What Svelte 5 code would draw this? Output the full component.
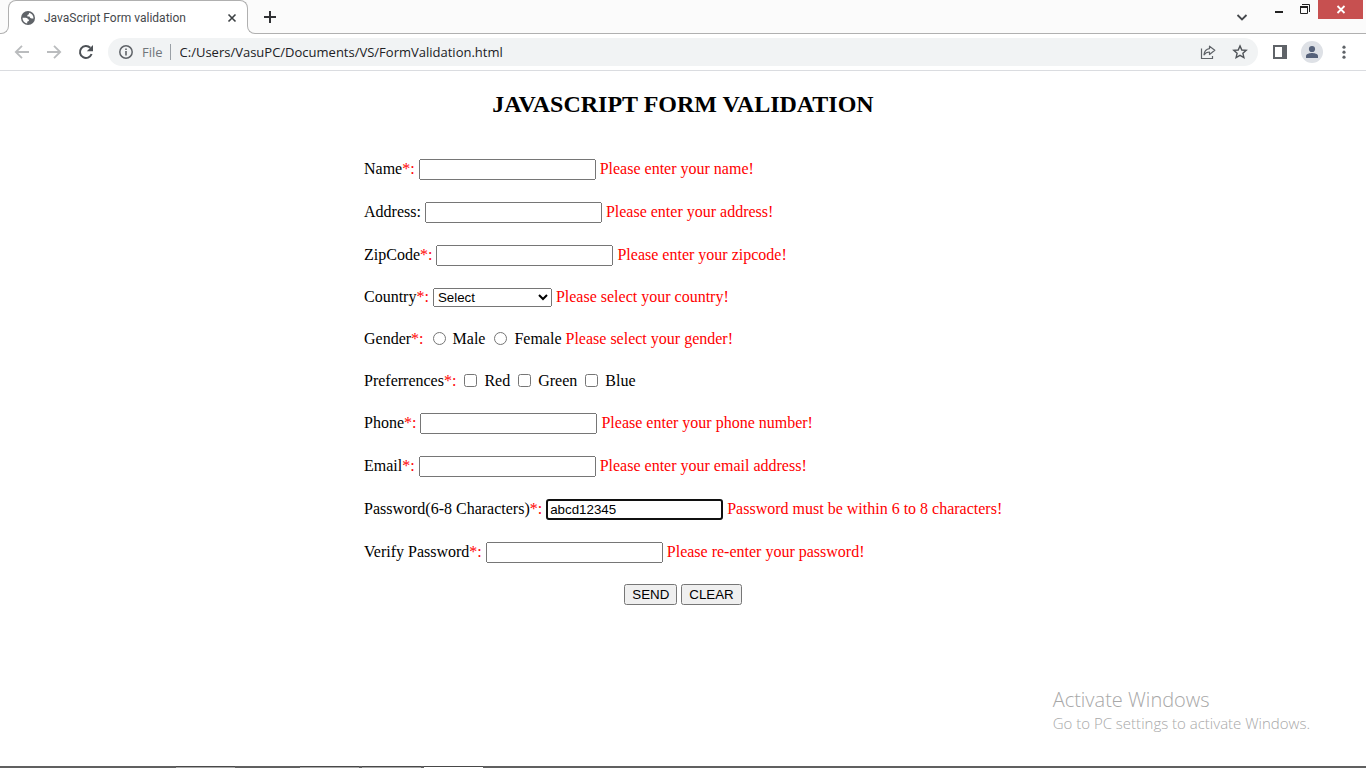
<script>
  const textRows = {
    name: { label: 'Name', required: true, error: 'Please enter your name!' },
    address: { label: 'Address', required: false, error: 'Please enter your address!' },
    zipcode: { label: 'ZipCode', required: true, error: 'Please enter your zipcode!' },
    phone: { label: 'Phone', required: true, error: 'Please enter your phone number!' },
    email: { label: 'Email', required: true, error: 'Please enter your email address!' },
    password: {
      label: 'Password(6-8 Characters)',
      required: true,
      error: 'Password must be within 6 to 8 characters!'
    },
    verify: { label: 'Verify Password', required: true, error: 'Please re-enter your password!' }
  };

  let values = $state({
    name: '', address: '', zipcode: '', phone: '', email: '', password: 'abcd12345', verify: ''
  });
  let url = $state('C:/Users/VasuPC/Documents/VS/FormValidation.html');
  const colours = ['Red', 'Green', 'Blue'];
  const genders = ['Male', 'Female'];
</script>

{#snippet textRow(id)}
  <div class="row">
    <label for={id}>{textRows[id].label}{#if textRows[id].required}<span class="red">*:</span>{:else}:{/if}</label>
    <input class="field" class:active={id === 'password'} {id} type="text" bind:value={values[id]} />
    <span class="red">{textRows[id].error}</span>
  </div>
{/snippet}

<div class="window">
  <header>
    <div class="tabstrip">
      <div class="tab">
        <svg width="16" height="16" viewBox="0 0 16 16">
          <circle cx="8" cy="8" r="7" fill="#5f6368" />
          <path d="M2.500 7.800H5.800Q8 8 8 9.600H9.200Q9.200 11.600 7.200 11.700V13.400C4.200 13 2.500 10.800 2.500 7.800ZM9 2.700V3.600Q9 4.900 7.400 4.900V6.600H9.400Q10 8.500 11.800 8.500H13.500C13.600 5.500 11.800 3.200 9 2.700Z" fill="#fff" />
        </svg>
        <span class="title">JavaScript Form validation</span>
        <button class="plain" aria-label="Close tab">
          <svg width="16" height="16" viewBox="0 0 16 16"><path d="M4.500 4.500l7 7M11.500 4.500l-7 7" stroke="#3c4043" stroke-width="1.600" /></svg>
        </button>
      </div>
      <button class="plain newtab" aria-label="New tab">
        <svg width="16" height="16" viewBox="0 0 16 16"><path d="M8 2v12M2 8h12" stroke="#303134" stroke-width="2" /></svg>
      </button>
      <div class="controls">
        <button class="plain chevron" aria-label="Search tabs">
          <svg width="16" height="16" viewBox="0 0 16 16"><path d="M3.500 6 8 10.500 12.500 6" fill="none" stroke="#45484c" stroke-width="1.800" /></svg>
        </button>
        <button class="plain" aria-label="Minimize">
          <svg width="26" height="19" viewBox="0 0 26 19"><path d="M9 11h8v2H9z" fill="#222" /></svg>
        </button>
        <button class="plain" aria-label="Restore">
          <svg width="26" height="19" viewBox="0 0 26 19"><path d="M8.500 6.500h7v7h-7z" fill="none" stroke="#222" /><path d="M8 6h8v2H8z" fill="#222" /><path d="M10 4.500h7.500V12" fill="none" stroke="#222" /></svg>
        </button>
        <button class="plain close" aria-label="Close">
          <svg width="45" height="19" viewBox="0 0 45 19"><path d="M19.500 6l7 7M26.500 6l-7 7" stroke="#fff" stroke-width="1.800" /></svg>
        </button>
      </div>
    </div>

    <div class="toolbar">
      <button class="plain" aria-label="Back">
        <svg width="16" height="16" viewBox="0 0 16 16"><path d="M15 8H2.500M8 1.800 1.800 8 8 14.200" fill="none" stroke="#babcbe" stroke-width="1.800" /></svg>
      </button>
      <button class="plain" aria-label="Forward">
        <svg width="16" height="16" viewBox="0 0 16 16"><path d="M1 8h12.500M8 1.800 14.200 8 8 14.200" fill="none" stroke="#babcbe" stroke-width="1.800" /></svg>
      </button>
      <button class="plain" aria-label="Reload">
        <svg width="16" height="16" viewBox="0 0 16 16"><path d="M13.600 10A6 6 0 1 1 12.300 3.800" fill="none" stroke="#4d5156" stroke-width="2" /><path d="M15 1v6.200H8.800z" fill="#4d5156" /></svg>
      </button>
      <div class="omnibox">
        <svg width="16" height="16" viewBox="0 0 16 16"><circle cx="8" cy="8" r="6.200" fill="none" stroke="#5f6368" stroke-width="1.500" /><path d="M7.200 7h1.600v4.500H7.200zM7.200 4.400h1.600V6H7.200z" fill="#5f6368" /></svg>
        <label for="url">File</label>
        <input id="url" type="text" bind:value={url} />
        <button class="plain" aria-label="Share">
          <svg width="16" height="16" viewBox="0 0 16 16"><path d="M1.500 4.500v10h11V12" fill="none" stroke="#5f6368" stroke-width="1.200" /><path d="M9.500 2.200 14.800 6.300 9.500 10.500V8C6.800 8 5.300 8.800 4 10.800 4.300 7.500 6 5 9.500 4.600Z" fill="none" stroke="#5f6368" stroke-width="1.200" stroke-linejoin="round" /></svg>
        </button>
        <button class="plain" aria-label="Bookmark">
          <svg width="16" height="16" viewBox="0 0 16 16"><path d="M8 1.900 9.800 6l4.400.4-3.300 2.900 1 4.300L8 11.300l-3.900 2.300 1-4.300L1.800 6.400 6.200 6Z" fill="none" stroke="#505459" stroke-width="1.400" /></svg>
        </button>
      </div>
      <button class="plain" aria-label="Side panel">
        <svg width="16" height="16" viewBox="0 0 16 16"><path d="M1 1h14v14H1zM3 3v10h7V3z" fill="#5f6368" fill-rule="evenodd" /></svg>
      </button>
      <button class="plain" aria-label="Profile">
        <svg width="22" height="22" viewBox="0 0 22 22"><circle cx="11" cy="11" r="11" fill="#dee1e6" /><circle cx="11" cy="8" r="3.100" fill="#56627a" /><path d="M5 17v-2c0-2.200 4-3 6-3s6 .8 6 3v2z" fill="#56627a" /></svg>
      </button>
      <button class="plain" aria-label="Menu">
        <svg width="16" height="16" viewBox="0 0 16 16"><circle cx="8" cy="3.200" r="1.600" fill="#5f6368" /><circle cx="8" cy="8.200" r="1.600" fill="#5f6368" /><circle cx="8" cy="13.200" r="1.600" fill="#5f6368" /></svg>
      </button>
    </div>
  </header>

  <main>
    <h1>JAVASCRIPT FORM VALIDATION</h1>
    <form onsubmit={(e) => e.preventDefault()}>
      {@render textRow('name')}
      {@render textRow('address')}
      {@render textRow('zipcode')}
      <div class="row short">
        <label for="country">Country<span class="red">*:</span></label>
        <select id="country"><option>Select</option></select>
        <span class="red">Please select your country!</span>
      </div>
      <div class="row" role="radiogroup" aria-labelledby="gender">
        <span id="gender">Gender<span class="red">*:</span></span>
        {#each genders as gender}
          <label class="choice"><input type="radio" name="gender" value={gender} />{gender}</label>
        {/each}
        <span class="red">Please select your gender!</span>
      </div>
      <div class="row short" role="group" aria-labelledby="preferences">
        <span id="preferences">Preferrences<span class="red">*:</span></span>
        {#each colours as colour}
          <label class="choice"><input type="checkbox" value={colour} />{colour}</label>
        {/each}
      </div>
      {@render textRow('phone')}
      {@render textRow('email')}
      {@render textRow('password')}
      {@render textRow('verify')}
      <div class="row short actions">
        <button type="submit">SEND</button>
        <button type="reset">CLEAR</button>
      </div>
    </form>
  </main>

  <aside>
    <p class="big">Activate Windows</p>
    <p>Go to PC settings to activate Windows.</p>
  </aside>

  <footer>
    <span class="item first"></span>
    <span class="item second"></span>
    <span class="item"></span>
    <span class="item current"></span>
  </footer>
</div>

<style>
  :global(body) {
    margin: 0;
    background: #fff;
  }
  .window {
    position: relative;
    display: flex;
    flex-direction: column;
    min-height: 100vh;
    font-family: "Liberation Serif", serif;
    font-size: 16px;
    color: #000;
  }
  svg {
    display: block;
    flex: none;
  }
  .plain {
    padding: 0;
    border: 0;
    background: none;
    flex: none;
  }
  header {
    font-family: "Open Sans", sans-serif;
    border-bottom: 1px solid #dadce0;
  }
  .tabstrip {
    display: flex;
    height: 33px;
    padding-left: 8px;
    background: #fbfbfb;
    border-bottom: 1px solid #b0b0b0;
  }
  .tab {
    position: relative;
    box-sizing: border-box;
    display: flex;
    align-items: center;
    gap: 8px;
    width: 240px;
    height: 34px;
    padding: 0 7px 0 11px;
    background: #fff;
    border: 1px solid #b0b0b0;
    border-bottom: 0;
    border-radius: 8px 8px 0 0;
  }
  .tab::before,
  .tab::after {
    content: "";
    position: absolute;
    bottom: 0;
    width: 9px;
    height: 8px;
    box-sizing: border-box;
    border-bottom: 1px solid #b0b0b0;
    background: #fbfbfb;
    box-shadow: 0 0 0 4px #fff;
  }
  .tab::before {
    left: -9px;
    border-right: 1px solid #b0b0b0;
    border-bottom-right-radius: 8px;
    clip-path: inset(0 -1px 0 0);
  }
  .tab::after {
    right: -9px;
    border-left: 1px solid #b0b0b0;
    border-bottom-left-radius: 8px;
    clip-path: inset(0 0 0 -1px);
  }
  .title {
    flex: 1;
    font-family: Roboto, sans-serif;
    font-size: 12px;
    color: #45484c;
    white-space: nowrap;
  }
  .newtab {
    margin-left: 14px;
  }
  .controls {
    display: flex;
    align-items: flex-start;
    margin: 0 3px 0 auto;
  }
  .chevron {
    align-self: center;
    margin-right: 16px;
  }
  .close {
    background: #c75050;
  }
  .toolbar {
    display: flex;
    align-items: center;
    gap: 16px;
    height: 36px;
    padding: 0 14px;
    background: #fff;
  }
  .toolbar > .plain:nth-last-child(2) {
    margin: 0 -3px;
  }
  .omnibox {
    flex: 1;
    display: flex;
    align-items: center;
    gap: 16px;
    height: 28px;
    margin-left: -2px;
    margin-right: -2px;
    padding: 0 10px;
    border-radius: 14px;
    background: #f1f3f4;
    font-size: 13px;
  }
  .omnibox label {
    margin: 0 -7px 0 -8px;
    padding-right: 7px;
    line-height: 16px;
    border-right: 1px solid #9aa0a6;
    color: #70757a;
  }
  .omnibox input {
    flex: 1;
    min-width: 0;
    padding: 0;
    border: 0;
    background: none;
    font: inherit;
    color: #202124;
  }
  main {
    flex: 1;
    padding: 0 8px;
  }
  h1 {
    margin: 20px 0 40px;
    font-size: 24px;
    line-height: 27px;
    text-align: center;
  }
  form {
    display: flex;
    flex-direction: column;
    gap: 21px;
    max-width: 638px;
    margin: 0 auto;
  }
  .row {
    display: flex;
    align-items: center;
    gap: 4px;
    height: 22px;
    line-height: 20px;
    white-space: nowrap;
  }
  .short {
    height: 20px;
  }
  .red {
    color: #f00;
  }
  .field {
    box-sizing: border-box;
    width: 177px;
    height: 21px;
    font-family: "Liberation Sans", sans-serif;
  }
  .active {
    padding: 1px 2px;
    border: 2px solid #101010;
    border-radius: 3px;
  }
  select {
    width: 119px;
    height: 19px;
    font-family: "Liberation Sans", sans-serif;
  }
  .choice {
    display: flex;
    align-items: center;
    gap: 4px;
  }
  .choice input {
    margin: 0 3px 1px 4px;
  }
  .choice input[type="radio"] {
    margin-left: 5px;
  }
  .actions {
    justify-content: center;
  }
  .actions button {
    height: 21px;
    padding: 1px 6px;
    font-family: "Liberation Sans", sans-serif;
  }
  aside {
    position: absolute;
    right: 56px;
    bottom: 34px;
    font-family: "Open Sans", sans-serif;
    font-size: 15px;
    font-weight: 300;
    line-height: 22px;
    color: #a8a8a8;
  }
  aside p {
    margin: 0;
  }
  aside .big {
    font-size: 20px;
    line-height: 24px;
  }
  footer {
    display: flex;
    gap: 3px;
    height: 2px;
    background: #606060;
  }
  .item {
    width: 59px;
    box-sizing: border-box;
    border-top: 1px solid #484848;
    background: #a8a8a8;
  }
  .first {
    margin-left: 176px;
  }
  .second {
    margin-left: 62px;
  }
  .current {
    background: #fff;
  }
</style>
